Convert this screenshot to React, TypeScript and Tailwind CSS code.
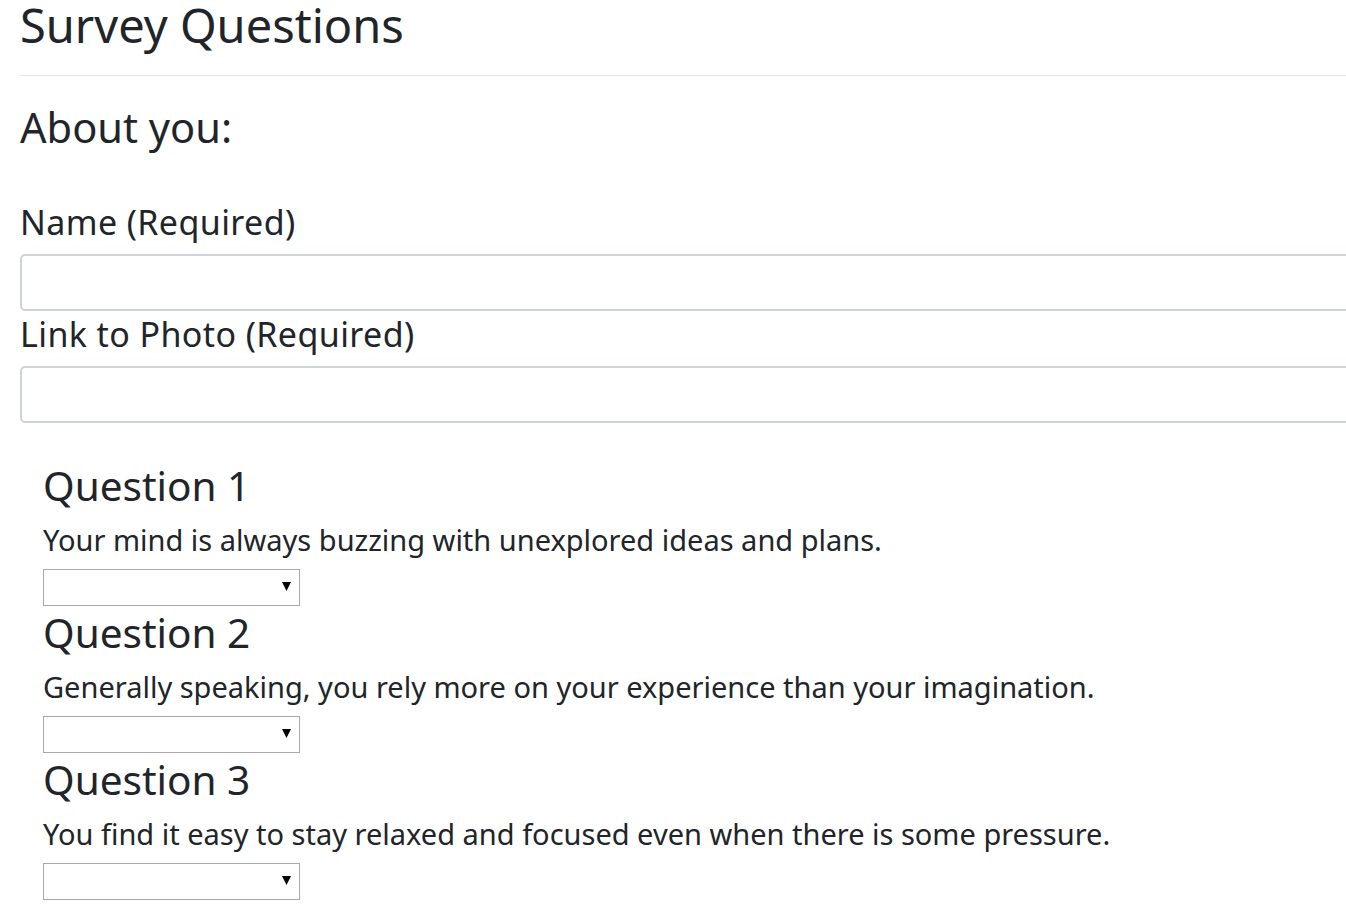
import React from "react";

const questions = [
  "Your mind is always buzzing with unexplored ideas and plans.",
  "Generally speaking, you rely more on your experience than your imagination.",
  "You find it easy to stay relaxed and focused even when there is some pressure.",
];

function Question({ n, text }: { n: number; text: string }) {
  return (
    <div className="pl-[23px]">
      <h3 className="text-[40.5px] leading-[50px] font-normal m-0">Question {n}</h3>
      <p className="text-[29px] leading-[34px] mt-[12px] m-0">{text}</p>
      <div className="relative w-[257px] h-[37px] mt-[12px] mb-[2px]">
        <select
          aria-label={`Question ${n}`}
          className="appearance-none w-full h-full bg-white border border-[#a9a9a9] rounded-none outline-none"
          defaultValue=""
        >
          <option value=""></option>
          <option value="1">1 (Strongly Disagree)</option>
          <option value="2">2</option>
          <option value="3">3</option>
          <option value="4">4</option>
          <option value="5">5 (Strongly Agree)</option>
        </select>
        <svg
          className="pointer-events-none absolute right-[9px] top-[13px]"
          width="9"
          height="9"
          viewBox="0 0 9 9"
        >
          <polygon points="0,0 9,0 4.5,9" fill="#000" />
        </svg>
      </div>
    </div>
  );
}

export default function App() {
  return (
    <div
      className="w-[1346px] h-[904px] overflow-hidden bg-white text-[#212529]"
      style={{ fontFamily: '"Noto Sans", "Open Sans", sans-serif' }}
    >
      <div className="w-[1420px] pl-[20px]">
        <h1 className="text-[47px] leading-[50px] font-normal m-0">Survey Questions</h1>
        <hr className="mt-[25px] border-0 border-t border-[#e5e5e5]" />
        <h2 className="text-[41.6px] leading-[50px] font-normal mt-[26px]">About you:</h2>
        <form className="mt-[53px]">
          <label className="block text-[34px] leading-[35px] tracking-[0.4px]">Name (Required)</label>
          <input
            type="text"
            className="block w-full h-[57px] mt-[14px] border-2 border-[#ced4da] rounded-[5px] bg-white outline-none"
          />
          <label className="block text-[34px] leading-[35px] tracking-[0.4px] mt-[6px]">Link to Photo (Required)</label>
          <input
            type="text"
            className="block w-full h-[57px] mt-[14px] border-2 border-[#ced4da] rounded-[5px] bg-white outline-none"
          />
          <div className="mt-[38px]">
            {questions.map((q, i) => (
              <Question key={i} n={i + 1} text={q} />
            ))}
          </div>
        </form>
      </div>
    </div>
  );
}
